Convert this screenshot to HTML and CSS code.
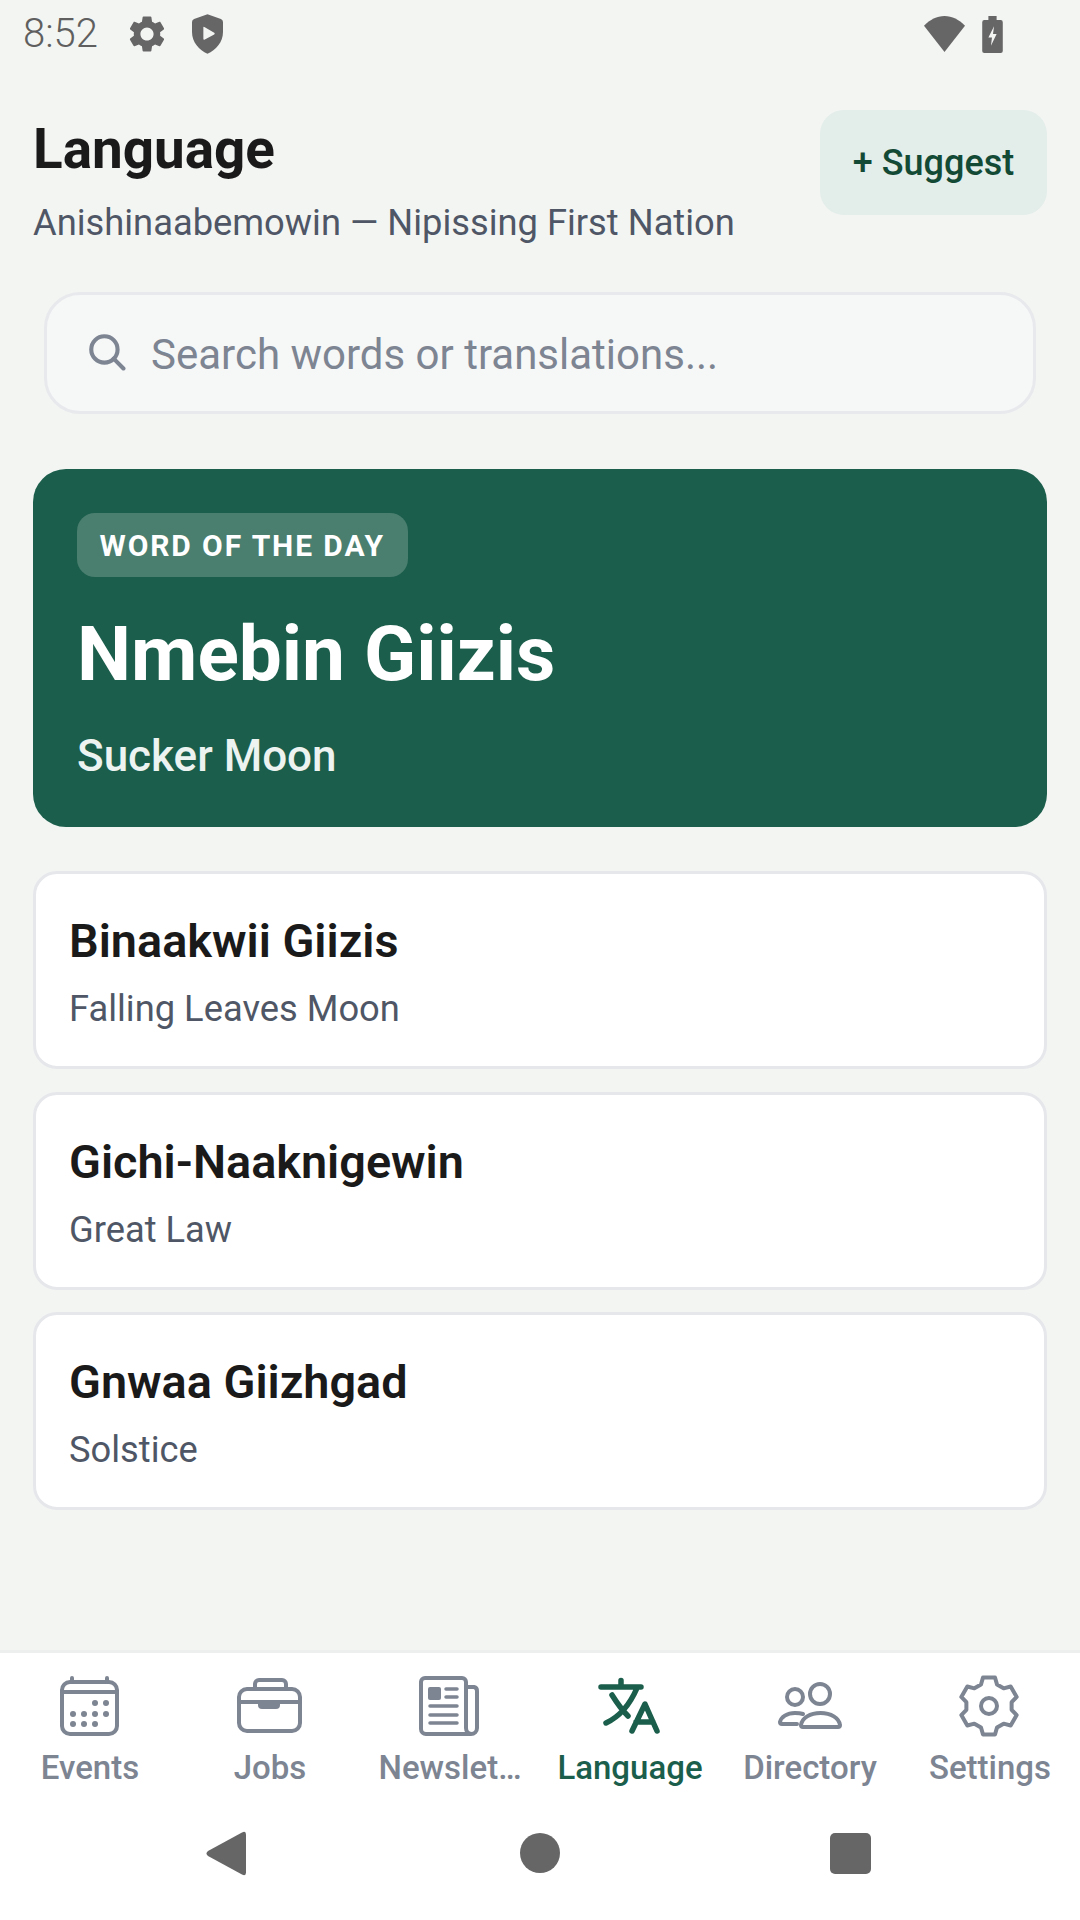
FILE: index.html
```html
<!DOCTYPE html>
<html lang="en">
<head>
<meta charset="utf-8">
<title>Language</title>
<link rel="stylesheet" href="styles.css">
</head>
<body>
<div class="app">
  <div class="status">
    <div class="status-left">
      <span class="time">8:52</span>
      <svg class="st-gear" viewBox="0 0 24 24"><path d="M19.14 12.94c.04-.3.06-.61.06-.94 0-.32-.02-.64-.07-.94l2.03-1.58c.18-.14.23-.41.12-.61l-1.92-3.32c-.12-.22-.37-.29-.59-.22l-2.39.96c-.5-.38-1.03-.7-1.62-.94l-.36-2.54c-.04-.24-.24-.41-.48-.41h-3.84c-.24 0-.43.17-.47.41l-.36 2.54c-.59.24-1.13.57-1.62.94l-2.39-.96c-.22-.08-.47 0-.59.22L2.74 8.87c-.12.21-.08.47.12.61l2.03 1.58c-.05.3-.09.63-.09.94s.02.64.07.94l-2.03 1.58c-.18.14-.23.41-.12.61l1.92 3.32c.12.22.37.29.59.22l2.39-.96c.5.38 1.03.7 1.62.94l.36 2.54c.05.24.24.41.48.41h3.84c.24 0 .44-.17.47-.41l.36-2.54c.59-.24 1.13-.56 1.62-.94l2.39.96c.22.08.47 0 .59-.22l1.92-3.32c.12-.22.07-.47-.12-.61l-2.01-1.58zM12 15.6c-1.98 0-3.6-1.62-3.6-3.6s1.62-3.6 3.6-3.6 3.6 1.62 3.6 3.6-1.62 3.6-3.6 3.6z"/></svg>
      <svg class="st-shield" viewBox="0 0 30 38"><path fill-rule="evenodd" d="M15 0 L28 4.500 Q30 5.200 30 7.500 V17 C30 27 23 34.500 15 38 C7 34.500 0 27 0 17 V7.500 Q0 5.200 2 4.500 Z M11 12.500 V23.500 Q11 25 12.400 24.300 L21.500 19.400 Q22.600 18.600 21.500 17.800 L12.400 12.400 Q11 11.400 11 12.500 Z"/></svg>
    </div>
    <div class="status-right">
      <svg class="st-wifi" viewBox="0 0 40 35"><path d="M0 9.500 C6 3.500 12.500 0 20 0 C27.500 0 34 3.500 40 9.500 L20 35 Z"/></svg>
      <svg class="st-batt" viewBox="0 0 20 36"><path fill-rule="evenodd" d="M6 0 H14 V4 H18 Q20 4 20 6 V34 Q20 36 18 36 H2 Q0 36 0 34 V6 Q0 4 2 4 H6 Z M11.500 10 L6 21 H9.500 L8.500 29 L14 17.500 H10.500 Z"/></svg>
    </div>
  </div>

  <main class="content">
    <header class="header">
      <div class="heading">
        <h1 class="title">Language</h1>
        <p class="subtitle">Anishinaabemowin — Nipissing First Nation</p>
      </div>
      <button class="suggest">+ Suggest</button>
    </header>

    <div class="search">
      <svg class="search-icon" viewBox="0 0 36 36"><circle cx="15" cy="15" r="12.800"/><path d="M24 24 L33.500 33.500"/></svg>
      <span class="search-text">Search words or translations...</span>
    </div>

    <section class="hero">
      <span class="badge">WORD OF THE DAY</span>
      <h2 class="hero-word">Nmebin Giizis</h2>
      <p class="hero-trans">Sucker Moon</p>
    </section>

    <div class="cards">
      <article class="card"><h3 class="card-word">Binaakwii Giizis</h3><p class="card-trans">Falling Leaves Moon</p></article>
      <article class="card"><h3 class="card-word">Gichi-Naaknigewin</h3><p class="card-trans">Great Law</p></article>
      <article class="card"><h3 class="card-word">Gnwaa Giizhgad</h3><p class="card-trans">Solstice</p></article>
    </div>
  </main>

  <nav class="tabs">
    <div class="tab">
      <svg class="tab-icon" viewBox="0 0 72 72"><rect x="8" y="12" width="55" height="52" rx="8"/><path d="M8 22H63M18 8V12M53 8V12"/><g class="dots"><circle cx="41" cy="33" r="3"/><circle cx="52" cy="33" r="3"/><circle cx="19" cy="44" r="3"/><circle cx="30" cy="44" r="3"/><circle cx="41" cy="44" r="3"/><circle cx="52" cy="44" r="3"/><circle cx="19" cy="54" r="3"/><circle cx="30" cy="54" r="3"/><circle cx="41" cy="54" r="3"/></g></svg>
      <span class="tab-label">Events</span>
    </div>
    <div class="tab">
      <svg class="tab-icon" viewBox="0 0 72 72"><rect x="5" y="19" width="61" height="42" rx="8"/><path d="M21 19V14A4 4 0 0 1 25 10H48A4 4 0 0 1 52 14V19M5 32H66"/><path class="solid" d="M24 32H46V35Q46 39 42 39H28Q24 39 24 35Z"/></svg>
      <span class="tab-label">Jobs</span>
    </div>
    <div class="tab">
      <svg class="tab-icon" viewBox="0 0 72 72"><path d="M53 17H60A4 4 0 0 1 63 21V58A6 6 0 0 1 57 64H12A5 5 0 0 1 7 59V12A4 4 0 0 1 11 8H48A4 4 0 0 1 52 12V58A6 6 0 0 0 57 64"/><rect class="solid" x="14" y="17" width="13" height="13" rx="2"/><path class="thin" d="M32 19H43M32 27H43M16 36H43M16 45H43M16 53H43"/></svg>
      <span class="tab-label">Newslet…</span>
    </div>
    <div class="tab tab-active">
      <svg class="tab-icon" viewBox="0 0 72 72"><path d="M7 17H47M27 10.500V17M43 18C37 32 27 46 12 53M18 25C23 33 28 40 34 46M38 61L51 34L63 61M42 52H59"/></svg>
      <span class="tab-label">Language</span>
    </div>
    <div class="tab">
      <svg class="tab-icon" viewBox="0 0 72 72"><circle cx="46" cy="24" r="10"/><circle cx="21" cy="27" r="8"/><path d="M29 57H64A2 2 0 0 0 66 55C65 48 57 43 46.500 43S28 48 27 55A2 2 0 0 0 29 57Z"/><path d="M29 44C26 43 24 43 21 43C13 43 7 47 6 52A2 2 0 0 0 8 54H23"/></svg>
      <span class="tab-label">Directory</span>
    </div>
    <div class="tab">
      <svg class="tab-icon" viewBox="0 0 72 72"><g transform="translate(35 36)"><path d="M-8-21.500L-6-28.500H6L8-21.500L14.620-17.680L21.680-19.450L27.680-9.050L22.620-3.820V3.820L27.680 9.050L21.680 19.450L14.620 17.680L8 21.500L6 28.500H-6L-8 21.500L-14.620 17.680L-21.680 19.450L-27.680 9.050L-22.620 3.820V-3.820L-27.680-9.050L-21.680-19.450L-14.620-17.680Z"/><circle r="8"/></g></svg>
      <span class="tab-label">Settings</span>
    </div>
  </nav>

  <div class="sysnav">
    <svg class="sys-back" viewBox="0 0 40 45"><path d="M36 1.500Q40-.5 40 3.500V41.500Q40 45.500 36 43.500L2 25Q-1 22.500 2 20Z"/></svg>
    <span class="sys-home"></span>
    <span class="sys-recent"></span>
  </div>
</div>
</body>
</html>
```

FILE: styles.css
```css
* { box-sizing: border-box; }
html, body { margin: 0; padding: 0; }
body { width: 1080px; height: 1920px; font-family: Roboto, "Noto Sans", sans-serif; background: #F3F5F3; overflow: hidden; }
h1, h2, h3, p { margin: 0; }

.app { width: 1080px; height: 1920px; display: flex; flex-direction: column; }

.status { height: 68px; flex: none; display: flex; align-items: center; justify-content: space-between; padding: 0 77px 0 23px; fill: #666666; }
.status-left { display: flex; align-items: center; }
.status-right { display: flex; align-items: center; gap: 17px; }
.time { font-size: 40px; font-weight: 300; color: #5F5F5F; line-height: 68px; width: 77px; }
.st-gear { width: 44px; height: 44px; margin-left: 25px; }
.st-shield { width: 31px; height: 40px; margin-left: 23px; }
.st-wifi { width: 41px; height: 36px; }
.st-batt { width: 21px; height: 37px; }

.content { flex: 1; display: flex; flex-direction: column; padding: 42px 33px 0; min-height: 0; }

.header { display: flex; justify-content: space-between; align-items: flex-start; }
.heading { padding-top: 7px; }
.title { font-size: 54.800px; font-weight: 700; line-height: 64px; color: #1A1A1A; }
.subtitle { font-size: 36.300px; font-weight: 400; line-height: 48px; color: #4F5766; margin-top: 18px; }
.suggest { width: 227px; height: 105px; border: 0; border-radius: 24px; background: #E3EDEA; color: #134A36; font-family: inherit; font-size: 36px; font-weight: 500; padding: 0; }

.search { margin: 45px 11px 0; height: 122px; flex: none; display: flex; align-items: center; padding-left: 42px; background: #F6F7F7; border: 3px solid #E7E9EC; border-radius: 36px; }
.search-icon { width: 37px; height: 37px; margin-top: -2px; fill: none; stroke: #7D8492; stroke-width: 4; stroke-linecap: round; }
.search-text { margin-left: 25px; padding-top: 2px; font-size: 42px; color: #7D8492; }

.hero { margin-top: 55px; height: 358px; flex: none; background: #1B5E4B; border-radius: 33px; padding: 44px 44px 0; color: #FFFFFF; display: flex; flex-direction: column; align-items: flex-start; }
.badge { height: 64px; padding: 0 22.500px; display: flex; align-items: center; background: #4A7E6E; border-radius: 18px; font-size: 30px; font-weight: 700; letter-spacing: 1.900px; }
.hero-word { font-size: 76.600px; font-weight: 700; line-height: 92px; margin-top: 31px; }
.hero-trans { font-size: 44px; font-weight: 500; line-height: 50px; margin-top: 31px; color: #ECF3F0; }

.cards { display: flex; flex-direction: column; gap: 22.500px; margin-top: 44px; }
.card { height: 198px; background: #FFFFFF; border: 3px solid #E5E7EB; border-radius: 24px; padding: 39px 33px 0; }
.card-word { font-size: 46.800px; font-weight: 600; line-height: 56px; color: #1A1A1A; }
.card-trans { font-size: 36.300px; font-weight: 400; line-height: 44px; color: #4F5766; margin-top: 18px; }

.tabs { height: 150px; flex: none; display: grid; grid-template-columns: repeat(6, 180px); background: #FFFFFF; border-top: 3px solid #ECEFED; padding-top: 17px; }
.tab { display: flex; flex-direction: column; align-items: center; color: #7D8492; stroke: #7D8492; min-width: 0; }
.tab-active { color: #1B5E4B; stroke: #1B5E4B; }
.tab-icon { width: 72px; height: 72px; fill: none; stroke-width: 4; stroke-linecap: round; stroke-linejoin: round; flex: none; }
.tab-active .tab-icon { stroke-width: 5.500; }
.dots, .solid { fill: #7D8492; stroke: none; }
.thin { stroke-width: 3.500; }
.tab-label { font-size: 33px; font-weight: 500; line-height: 42px; margin-top: 5px; white-space: nowrap; }

.sysnav { height: 120px; flex: none; background: #FFFFFF; display: flex; align-items: center; padding-left: 206px; padding-bottom: 14px; }
.sys-back { width: 40px; height: 45px; fill: #666666; }
.sys-home { width: 40px; height: 40px; margin-left: 274px; border-radius: 50%; background: #666666; }
.sys-recent { width: 41px; height: 41px; margin-left: 270px; border-radius: 5px; background: #666666; }
```
